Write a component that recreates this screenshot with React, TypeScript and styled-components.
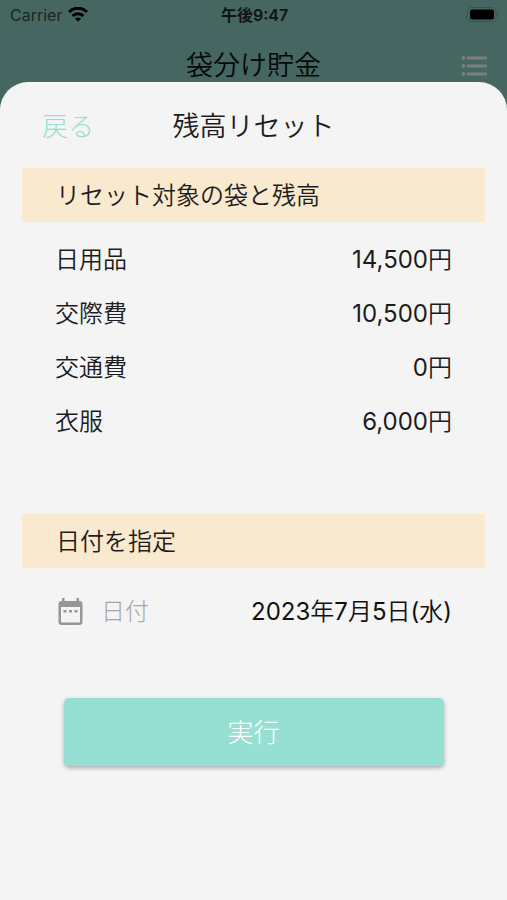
import React from 'react';
import styled, { createGlobalStyle } from 'styled-components';

const GlobalStyle = createGlobalStyle`
  * { box-sizing: border-box; }
  body {
    margin: 0;
    background: #466661;
    color: #1c1c1c;
    font-family: Inter, "Noto Sans CJK JP", sans-serif;
    font-weight: 350;
  }
  button { font: inherit; color: inherit; border: 0; padding: 0; background: none; cursor: pointer; }
`;

const Screen = styled.div`
  min-height: 100vh;
  display: flex;
  flex-direction: column;
`;

const StatusBar = styled.div`
  height: 30px;
  padding: 0 8px 0 10px;
  display: grid;
  grid-template-columns: 1fr auto 1fr;
  align-items: center;
  color: #101414;
  font-size: 16px;
  line-height: 20px;
`;

const Carrier = styled.div`
  display: flex;
  align-items: center;
  gap: 6px;
  color: #1b2625;
  font-weight: 400;
`;

const Clock = styled.time`
  font-weight: 600;
`;

const Battery = styled.svg`
  justify-self: end;
`;

const AppBar = styled.header`
  height: 52px;
  padding: 20px 20px 0;
  display: grid;
  grid-template-columns: 32px 1fr 32px;
  align-items: center;
`;

const AppTitle = styled.h1`
  grid-column: 2;
  margin: 0;
  text-align: center;
  font-size: 27px;
  line-height: 32px;
  font-weight: 350;
  color: #050808;
`;

const MenuButton = styled.button`
  display: flex;
  justify-content: flex-end;
`;

const Sheet = styled.main`
  flex: 1;
  padding: 4px 22px 32px;
  border-radius: 28px 28px 0 0;
  background: #f4f4f4;
`;

const SheetHeader = styled.div`
  height: 82px;
  padding: 0 20px;
  display: grid;
  grid-template-columns: 1fr auto 1fr;
  align-items: center;
  line-height: 32px;
`;

const BackButton = styled.button`
  justify-self: start;
  color: #96dfd3;
  font-size: 26px;
  font-weight: 300;
`;

const SheetTitle = styled.h2`
  margin: 0;
  font-size: 27px;
  font-weight: 350;
`;

const Banner = styled.h3`
  margin: 0;
  height: 54px;
  padding: 2px 34px 0;
  display: flex;
  align-items: center;
  background: #f8e9cf;
  font-size: 24px;
  line-height: 32px;
  font-weight: 350;
`;

const Balances = styled.dl`
  margin: 11px 0 65px;
  padding: 0 33px;
`;

const Row = styled.div`
  height: 54px;
  display: flex;
  align-items: center;
  justify-content: space-between;
  font-size: 24px;
  line-height: 32px;
`;

const Name = styled.dt``;

const Amount = styled.dd`
  margin: 0;
`;

const Digits = styled.span`
  font-weight: 400;
`;

const DateRow = styled(Row)`
  margin: 17px 0 59px;
  padding: 0 33px;
`;

const DateLabel = styled.span`
  display: flex;
  align-items: center;
  gap: 16px;
  color: #a6a6a6;
  font-weight: 300;
`;

const DateButton = styled.button`
  color: #111;
`;

const SubmitButton = styled.button`
  display: block;
  width: calc(100% - 83px);
  height: 68px;
  margin: 0 auto;
  padding-top: 2px;
  border-radius: 5px;
  background: #96dfd3;
  color: #fff;
  font-size: 26px;
  line-height: 32px;
  font-weight: 300;
  box-shadow: 0 2px 4px rgba(0, 0, 0, 0.3);
`;

const envelopes = [
  { name: '日用品', balance: 14500 },
  { name: '交際費', balance: 10500 },
  { name: '交通費', balance: 0 },
  { name: '衣服', balance: 6000 },
];

const WifiIcon = () => (
  <svg width="20" height="16" viewBox="0 0 20 16" fill="none" stroke="#000" strokeWidth="3" aria-hidden="true">
    <path d="M1 5C6 -.1 14 -.1 19 5" />
    <path d="M4.600 8.900c3-3 7.800-3 10.800 0" />
    <path d="M10 14.700 6.900 11.600c1.700-1.600 4.500-1.600 6.200 0z" fill="#000" stroke="none" />
  </svg>
);

const BatteryIcon = () => (
  <Battery width="34" height="16" viewBox="0 0 34 16" aria-hidden="true">
    <rect x="2" y=".5" width="29" height="14" rx="4.500" fill="none" stroke="#38544f" />
    <rect x="5" y="2.500" width="24" height="10" rx="2.500" fill="#000" />
    <path d="M32 5c2 .7 2 4.300 0 5z" fill="#38544f" />
  </Battery>
);

const ListIcon = () => (
  <svg width="26" height="22" viewBox="0 0 26 22" fill="#7c7f7f" aria-hidden="true">
    {[3, 11, 19].map((y) => (
      <g key={y}>
        <circle cx="2.500" cy={y} r="2" />
        <rect x="6" y={y - 1.5} width="20" height="3" rx=".5" />
      </g>
    ))}
  </svg>
);

const CalendarIcon = () => (
  <svg width="30" height="30" viewBox="0 0 30 30" aria-hidden="true">
    <path
      fillRule="evenodd"
      d="M7 1h2.500v3h12V1H24v3h.5a3 3 0 0 1 3 3v18a3 3 0 0 1-3 3h-18a3 3 0 0 1-3-3V7a3 3 0 0 1 3-3H7zM6 10v14.500a1 1 0 0 0 1 1h17a1 1 0 0 0 1-1V10z"
      fill="#969696"
    />
    <path d="M8.500 13h3v2.500h-3zm5.500 0h3v2.500h-3zm5.500 0h3v2.500h-3z" fill="#969696" />
  </svg>
);

export default function App() {
  return (
    <Screen>
      <GlobalStyle />
      <StatusBar>
        <Carrier>
          Carrier
          <WifiIcon />
        </Carrier>
        <Clock>午後9:47</Clock>
        <BatteryIcon />
      </StatusBar>
      <AppBar>
        <AppTitle>袋分け貯金</AppTitle>
        <MenuButton type="button" aria-label="メニュー">
          <ListIcon />
        </MenuButton>
      </AppBar>
      <Sheet>
        <SheetHeader>
          <BackButton type="button">戻る</BackButton>
          <SheetTitle>残高リセット</SheetTitle>
        </SheetHeader>
        <Banner>リセット対象の袋と残高</Banner>
        <Balances>
          {envelopes.map(({ name, balance }) => (
            <Row key={name}>
              <Name>{name}</Name>
              <Amount>
                <Digits>{balance.toLocaleString('en-US')}</Digits>円
              </Amount>
            </Row>
          ))}
        </Balances>
        <Banner>日付を指定</Banner>
        <DateRow>
          <DateLabel id="date-label">
            <CalendarIcon />
            日付
          </DateLabel>
          <DateButton type="button" aria-describedby="date-label">
            <Digits>2023</Digits>年<Digits>7</Digits>月<Digits>5</Digits>日<Digits>(</Digits>水<Digits>)</Digits>
          </DateButton>
        </DateRow>
        <SubmitButton type="button">実行</SubmitButton>
      </Sheet>
    </Screen>
  );
}
